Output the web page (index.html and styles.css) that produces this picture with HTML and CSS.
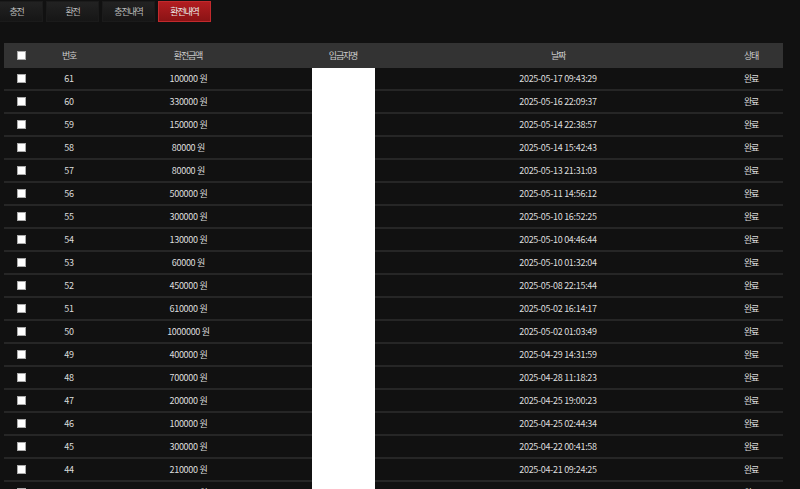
FILE: index.html
```html
<!DOCTYPE html>
<html>

<head>
    <link rel="stylesheet" href="styles.css">
</head>

<body>
    <div class="tabs">
        <a class="tab">충전</a>
        <a class="tab">환전</a>
        <a class="tab">충전내역</a>
        <a class="tab active">환전내역</a>
    </div>

    <table class="list">
        <colgroup>
            <col class="c-check">
            <col class="c-no">
            <col class="c-amount">
            <col class="c-name">
            <col class="c-date">
            <col class="c-state">
        </colgroup>
        <thead>
            <tr>
                <th><input type="checkbox"></th>
                <th class="ko">번호</th>
                <th class="ko">환전금액</th>
                <th class="ko">입금자명</th>
                <th class="ko">날짜</th>
                <th class="ko state">상태</th>
            </tr>
        </thead>
        <tbody>
            <tr><td><input type="checkbox"></td><td>61</td><td>100000 <span class="ko">원</span></td><td></td><td>2025-05-17 09:43:29</td><td class="ko state">완료</td></tr>
            <tr><td><input type="checkbox"></td><td>60</td><td>330000 <span class="ko">원</span></td><td></td><td>2025-05-16 22:09:37</td><td class="ko state">완료</td></tr>
            <tr><td><input type="checkbox"></td><td>59</td><td>150000 <span class="ko">원</span></td><td></td><td>2025-05-14 22:38:57</td><td class="ko state">완료</td></tr>
            <tr><td><input type="checkbox"></td><td>58</td><td>80000 <span class="ko">원</span></td><td></td><td>2025-05-14 15:42:43</td><td class="ko state">완료</td></tr>
            <tr><td><input type="checkbox"></td><td>57</td><td>80000 <span class="ko">원</span></td><td></td><td>2025-05-13 21:31:03</td><td class="ko state">완료</td></tr>
            <tr><td><input type="checkbox"></td><td>56</td><td>500000 <span class="ko">원</span></td><td></td><td>2025-05-11 14:56:12</td><td class="ko state">완료</td></tr>
            <tr><td><input type="checkbox"></td><td>55</td><td>300000 <span class="ko">원</span></td><td></td><td>2025-05-10 16:52:25</td><td class="ko state">완료</td></tr>
            <tr><td><input type="checkbox"></td><td>54</td><td>130000 <span class="ko">원</span></td><td></td><td>2025-05-10 04:46:44</td><td class="ko state">완료</td></tr>
            <tr><td><input type="checkbox"></td><td>53</td><td>60000 <span class="ko">원</span></td><td></td><td>2025-05-10 01:32:04</td><td class="ko state">완료</td></tr>
            <tr><td><input type="checkbox"></td><td>52</td><td>450000 <span class="ko">원</span></td><td></td><td>2025-05-08 22:15:44</td><td class="ko state">완료</td></tr>
            <tr><td><input type="checkbox"></td><td>51</td><td>610000 <span class="ko">원</span></td><td></td><td>2025-05-02 16:14:17</td><td class="ko state">완료</td></tr>
            <tr><td><input type="checkbox"></td><td>50</td><td>1000000 <span class="ko">원</span></td><td></td><td>2025-05-02 01:03:49</td><td class="ko state">완료</td></tr>
            <tr><td><input type="checkbox"></td><td>49</td><td>400000 <span class="ko">원</span></td><td></td><td>2025-04-29 14:31:59</td><td class="ko state">완료</td></tr>
            <tr><td><input type="checkbox"></td><td>48</td><td>700000 <span class="ko">원</span></td><td></td><td>2025-04-28 11:18:23</td><td class="ko state">완료</td></tr>
            <tr><td><input type="checkbox"></td><td>47</td><td>200000 <span class="ko">원</span></td><td></td><td>2025-04-25 19:00:23</td><td class="ko state">완료</td></tr>
            <tr><td><input type="checkbox"></td><td>46</td><td>100000 <span class="ko">원</span></td><td></td><td>2025-04-25 02:44:34</td><td class="ko state">완료</td></tr>
            <tr><td><input type="checkbox"></td><td>45</td><td>300000 <span class="ko">원</span></td><td></td><td>2025-04-22 00:41:58</td><td class="ko state">완료</td></tr>
            <tr><td><input type="checkbox"></td><td>44</td><td>210000 <span class="ko">원</span></td><td></td><td>2025-04-21 09:24:25</td><td class="ko state">완료</td></tr>
            <tr><td><input type="checkbox"></td><td>43</td><td>200000 <span class="ko">원</span></td><td></td><td>2025-04-19 04:06:40</td><td class="ko state">완료</td></tr>
        </tbody>
    </table>

    <!-- redacted name column -->
    <div class="mask"></div>
</body>

</html>
```

FILE: styles.css
```css
body {
    margin: 0;
    background-color: #111;
    font-family: "Noto Sans CJK KR", "Noto Sans", sans-serif;
    font-size: 9px;
    color: #ddd;
    height: 489px;
    overflow: hidden;
    position: relative;
}

.tabs {
    display: flex;
    gap: 3px;
    margin-left: -10px;
    padding-top: 1px;
}

.tab {
    width: 53px;
    height: 21px;
    line-height: 19px;
    box-sizing: border-box;
    text-align: center;
    color: #bbb;
    letter-spacing: -1.2px;
    background: linear-gradient(#222, #161616);
    border: 1px solid #1b1b1b;
}

.tab.active {
    color: #e8e8e8;
    background: linear-gradient(#b21d20, #8b1315);
    border-color: #c22a2d;
}

.list {
    margin: 21px 0 0 4px;
    width: 779px;
    font-size: inherit;
    line-height: 12px;
    table-layout: fixed;
    border-collapse: separate;
    border-spacing: 0;
    letter-spacing: -0.3px;
}

.c-check { width: 34px; }
.c-no { width: 62px; }
.c-amount { width: 176px; }
.c-name { width: 134px; }
.c-date { width: 296px; }
.c-state { width: 77px; }

.list th {
    background-color: #333;
    height: 25px;
    padding: 0;
    font-weight: normal;
    color: #ccc;
}

.list td {
    height: 21px;
    padding: 0;
    text-align: center;
    border-bottom: 2px solid #262626;
}

.ko {
    letter-spacing: -1.2px;
}

.list .state {
    padding-left: 13px;
}

input[type="checkbox"] {
    appearance: none;
    -webkit-appearance: none;
    width: 9px;
    height: 9px;
    display: block;
    margin: 0 auto;
    background-color: #fff;
    border: 1px solid #aaa;
    box-sizing: border-box;
}

.mask {
    position: absolute;
    left: 312px;
    top: 68px;
    width: 63px;
    height: 440px;
    background-color: #fff;
}
```
